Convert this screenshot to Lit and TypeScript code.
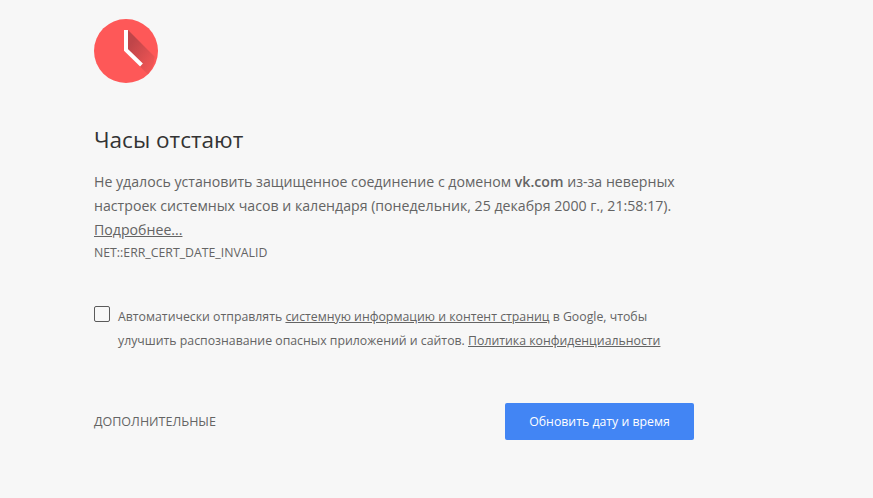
import { LitElement, html, css } from "lit";
import { customElement } from "lit/decorators.js";

@customElement("app-root")
export class AppRoot extends LitElement {
  static styles = css`
    :host {
      display: block;
      height: 498px;
      overflow: hidden;
      background: #f7f7f7;
      font-family: "Open Sans", "Noto Sans", sans-serif;
      color: #646464;
    }
    .page {
      display: flex;
      flex-direction: column;
      width: 600px;
      padding: 19px 0 0 94px;
    }
    .icon {
      display: block;
      width: 64px;
      height: 64px;
    }
    h1 {
      margin: 42px 0 0;
      font-size: 22.5px;
      line-height: 30px;
      font-weight: 400;
      color: #333;
    }
    .desc {
      margin: 15px 0 0;
      font-size: 14.15px;
      line-height: 24px;
      white-space: nowrap;
    }
    .desc b {
      font-weight: 600;
    }
    a {
      color: inherit;
      text-decoration: underline;
    }
    .code {
      margin-top: 1px;
      font-size: 12.3px;
      line-height: 20px;
    }
    .opt {
      display: flex;
      gap: 8px;
      margin-top: 42px;
      font-size: 12.3px;
      line-height: 24px;
      white-space: nowrap;
    }
    .box {
      flex: none;
      width: 14px;
      height: 14px;
      margin-top: 1px;
      border: 1px solid #5a5a5a;
      border-radius: 2px;
    }
    .actions {
      display: flex;
      align-items: center;
      justify-content: space-between;
      margin-top: 50px;
    }
    .more {
      font-size: 12.5px;
    }
    button {
      width: 189px;
      height: 37px;
      padding: 0;
      border: 0;
      border-radius: 2px;
      background: #4285f4;
      color: #fff;
      font: inherit;
      font-size: 12.3px;
    }
  `;

  render() {
    return html`
      <main class="page">
        <svg class="icon" viewBox="0 0 64 64" aria-hidden="true">
          <defs>
            <linearGradient id="shade" gradientUnits="userSpaceOnUse" x1="32" y1="32" x2="56" y2="48">
              <stop offset="0" stop-color="#bf4549" />
              <stop offset="1" stop-color="#ee5454" />
            </linearGradient>
          </defs>
          <circle cx="32" cy="32" r="32" fill="#fe5858" />
          <path d="M34 11 L60.7 37.7 A32 32 0 0 1 53.8 55.3 L46 47.5 L34 35Z" fill="url(#shade)" />
          <path d="M32 11 V31 L47.5 46" fill="none" stroke="#fff" stroke-width="4" />
        </svg>
        <h1>Часы отстают</h1>
        <p class="desc">
          Не удалось установить защищенное соединение с доменом <b>vk.com</b> из-за неверных<br />
          настроек системных часов и календаря (понедельник, 25 декабря 2000 г., 21:58:17).<br />
          <a href="#">Подробнее...</a>
        </p>
        <div class="code">NET::ERR_CERT_DATE_INVALID</div>
        <label class="opt">
          <span class="box"></span>
          <span>
            Автоматически отправлять <a href="#">системную информацию и контент страниц</a> в Google, чтобы<br />
            улучшить распознавание опасных приложений и сайтов. <a href="#">Политика конфиденциальности</a>
          </span>
        </label>
        <div class="actions">
          <span class="more">ДОПОЛНИТЕЛЬНЫЕ</span>
          <button>Обновить дату и время</button>
        </div>
      </main>
    `;
  }
}
